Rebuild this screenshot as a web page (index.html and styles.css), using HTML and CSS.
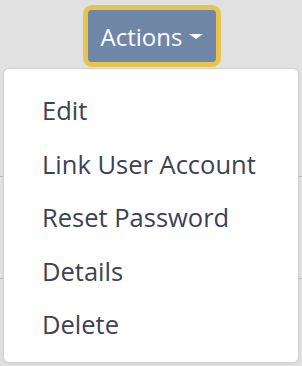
FILE: index.html
```html
<!DOCTYPE html>
<html lang="en">
	<head>
		<meta charset="utf-8">
		<title>Actions</title>
		<link rel="stylesheet" href="styles.css">
	</head>
	<body>
		<div class="page">
			<div class="dropdown">
				<button type="button" class="btnActions">Actions<span class="caret"></span></button>
			</div>

			<!-- rows of the table behind the open menu -->
			<div class="tableBehind">
				<div class="row"></div>
				<div class="row"></div>
			</div>

			<ul class="menu">
				<li><a href="#">Edit</a></li>
				<li><a href="#">Link User Account</a></li>
				<li><a href="#">Reset Password</a></li>
				<li><a href="#">Details</a></li>
				<li><a href="#">Delete</a></li>
			</ul>
		</div>
	</body>
</html>
```

FILE: styles.css
```css
html, body {
	margin: 0;
	padding: 0;
}

body {
	background-color: #e1e1e1;
	font-family: "Open Sans", "Noto Sans", sans-serif;
	font-size: 25.5px;
	width: 302px;
	height: 366px;
	overflow: hidden;
}

.page {
	position: relative;
	height: 366px;
}

.dropdown {
	display: flex;
	justify-content: center;
	padding-top: 10px;
}

.btnActions {
	display: flex;
	align-items: center;
	font-family: inherit;
	font-size: 24px;
	line-height: 36px;
	color: #ffffff;
	background-color: #7086a7;
	border: 0;
	border-radius: 4px;
	padding: 9px 13px 7px 13px;
	box-shadow: 0 0 0 5px #e6c44e;
	margin-left: 2px;
}

.caret {
	display: inline-block;
	width: 0;
	height: 0;
	margin-left: 7px;
	margin-top: -2px;
	border-top: 5px solid #ffffff;
	border-left: 7px solid transparent;
	border-right: 7px solid transparent;
}

.tableBehind {
	margin-top: 114px;
}

.row {
	height: 101px;
	border-top: 1px solid #b9b9b9;
}

.menu {
	position: absolute;
	top: 68px;
	left: 3px;
	box-sizing: border-box;
	width: 296px;
	height: 295px;
	margin: 0;
	padding: 15px 0 10px 0;
	list-style: none;
	background-color: #ffffff;
	border: 1px solid #d2d2d2;
	border-radius: 6px;
	box-shadow: 0 1px 3px rgba(0, 0, 0, 0.08);
}

.menu a {
	display: block;
	padding: 8px 20px 8px 38px;
	line-height: 37.6px;
	color: #3d4252;
	text-decoration: none;
	white-space: nowrap;
}
```
